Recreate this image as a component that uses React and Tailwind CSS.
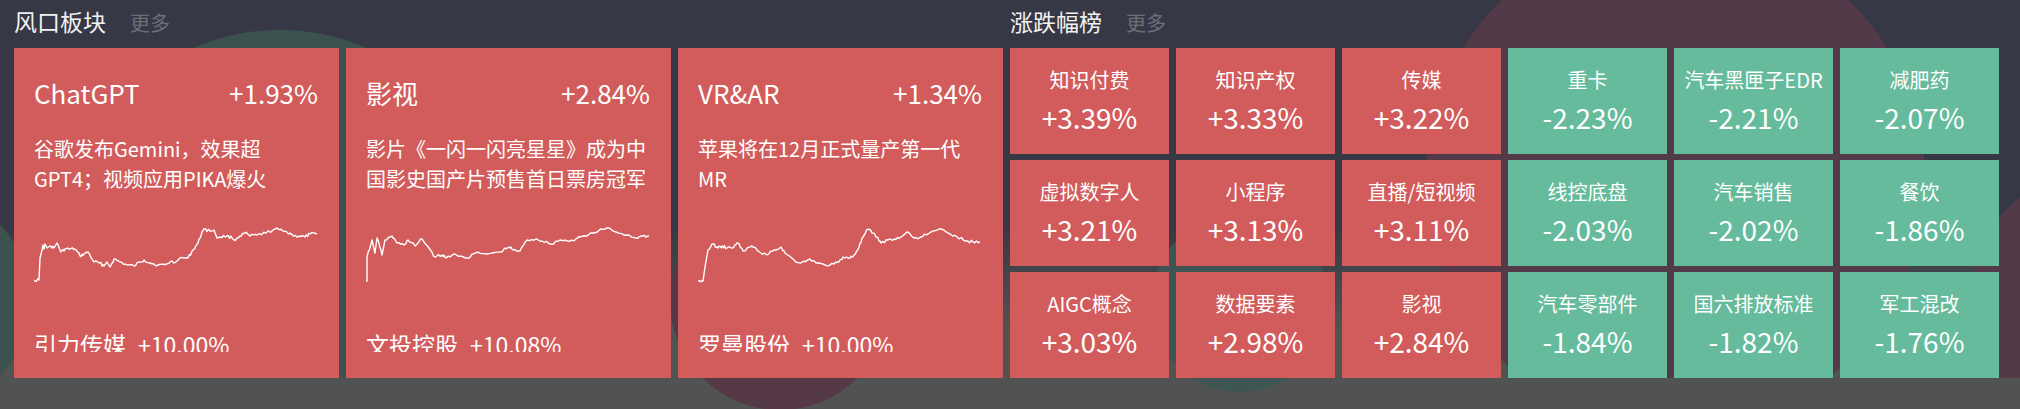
import React from "react";

// 风口板块 cards
const hotCards = [
  {
    name: "ChatGPT",
    pct: "+1.93%",
    lines: ["谷歌发布Gemini，效果超", "GPT4；视频应用PIKA爆火"],
    stock: "引力传媒",
    stockPct: "+10.00%",
    pts: [
      [0, 56], [5, 56], [6, 34], [8, 26], [9, 21], [10, 25], [11, 20], [13, 24], [16, 22], [20, 24], [23, 19],
      [27, 28], [31, 25], [36, 25], [41, 25], [46, 32], [50, 30], [54, 28], [60, 38], [66, 39], [70, 42],
      [73, 38], [76, 43], [80, 35], [86, 38], [93, 41], [100, 42], [106, 38], [110, 36], [116, 39], [124, 41],
      [131, 41], [136, 38], [143, 37], [146, 34], [154, 34], [159, 26], [164, 19], [168, 8], [170, 5], [176, 7],
      [180, 6], [183, 14], [186, 13], [193, 12], [198, 14], [200, 16], [206, 12], [211, 9], [216, 12], [223, 11],
      [232, 9], [241, 5], [249, 7], [256, 9], [260, 12], [266, 12], [271, 13], [276, 10], [283, 10],
    ],
  },
  {
    name: "影视",
    pct: "+2.84%",
    lines: ["影片《一闪一闪亮星星》成为中", "国影史国产片预售首日票房冠军"],
    stock: "文投控股",
    stockPct: "+10.08%",
    pts: [
      [0, 57], [1, 57], [1, 33], [6, 16], [9, 29], [11, 14], [16, 31], [19, 16], [26, 12], [31, 19], [38, 21],
      [42, 16], [49, 22], [56, 15], [63, 24], [69, 33], [76, 31], [80, 34], [89, 30], [103, 34], [109, 29],
      [121, 30], [134, 28], [143, 23], [147, 26], [154, 27], [161, 16], [170, 15], [176, 17], [185, 20],
      [194, 16], [201, 17], [210, 15], [214, 13], [228, 9], [241, 4], [250, 8], [261, 11], [270, 14],
      [277, 12], [283, 12],
    ],
  },
  {
    name: "VR&AR",
    pct: "+1.34%",
    lines: ["苹果将在12月正式量产第一代", "MR"],
    stock: "罗曼股份",
    stockPct: "+10.00%",
    pts: [
      [0, 57], [5, 57], [7, 43], [10, 26], [15, 20], [20, 24], [24, 22], [29, 24], [36, 23], [40, 19], [45, 27],
      [54, 22], [60, 27], [69, 31], [76, 26], [83, 23], [87, 29], [96, 36], [103, 39], [112, 35], [118, 39],
      [127, 41], [136, 40], [141, 38], [145, 33], [152, 34], [156, 31], [161, 23], [165, 13], [170, 5],
      [174, 9], [179, 13], [183, 19], [190, 16], [196, 15], [203, 13], [210, 8], [216, 14], [223, 13],
      [230, 10], [241, 5], [250, 9], [259, 13], [268, 17], [275, 18], [282, 18],
    ],
  },
];

// 涨跌幅榜, row by row: 3 up + 3 down
const ranks = [
  ["知识付费", "+3.39%", true], ["知识产权", "+3.33%", true], ["传媒", "+3.22%", true],
  ["重卡", "-2.23%", false], ["汽车黑匣子EDR", "-2.21%", false], ["减肥药", "-2.07%", false],
  ["虚拟数字人", "+3.21%", true], ["小程序", "+3.13%", true], ["直播/短视频", "+3.11%", true],
  ["线控底盘", "-2.03%", false], ["汽车销售", "-2.02%", false], ["餐饮", "-1.86%", false],
  ["AIGC概念", "+3.03%", true], ["数据要素", "+2.98%", true], ["影视", "+2.84%", true],
  ["汽车零部件", "-1.84%", false], ["国六排放标准", "-1.82%", false], ["军工混改", "-1.76%", false],
];

// adds a bit of noise between points so the line looks like intraday ticks
function jagged(pts, seed) {
  let s = seed;
  const rnd = () => {
    s = (s * 9301 + 49297) % 233280;
    return s / 233280 - 0.5;
  };
  const out = [pts[0]];
  for (let i = 1; i < pts.length; i++) {
    const [x0, y0] = pts[i - 1];
    const [x1, y1] = pts[i];
    if (x1 - x0 > 3) {
      for (let k = 1; k < 4; k++) {
        const t = k / 4;
        out.push([x0 + (x1 - x0) * t, y0 + (y1 - y0) * t + rnd() * 3]);
      }
    }
    out.push([x1, y1]);
  }
  return out.map(([x, y]) => `${x.toFixed(1)},${y.toFixed(1)}`).join(" ");
}

function Header({ title }) {
  return (
    <div className="h-[48px] pt-[6px] flex items-baseline">
      <span className="text-[23px] leading-[30px] text-[#f2f2f2]">{title}</span>
      <span className="ml-[24px] text-[20px] leading-[30px] text-[#6d6f78]">更多</span>
    </div>
  );
}

function HotCard({ card, i }) {
  return (
    <div className="bg-[#d25c5b] pt-[25px] pl-[20px] pr-[21px] text-white">
      <div className="h-[279px] overflow-hidden">
        <div className="flex justify-between h-[40px] text-[26px] leading-[40px]">
          <span>{card.name}</span>
          <span>{card.pct}</span>
        </div>
        <div className="mt-[21px] h-[60px] text-[20px] leading-[30px] whitespace-nowrap">
          {card.lines.map((l) => (
            <div key={l}>{l}</div>
          ))}
        </div>
        <svg className="mt-[30px] block" width="284" height="60" viewBox="0 0 284 60">
          <polyline
            points={jagged(card.pts, 17 + i * 31)}
            fill="none"
            stroke="#fff"
            strokeWidth="1.4"
            strokeLinejoin="round"
          />
        </svg>
        <div className="mt-[45px] text-[23px] leading-[30px] whitespace-nowrap">
          <span>{card.stock}</span>
          <span className="ml-3">{card.stockPct}</span>
        </div>
      </div>
    </div>
  );
}

export default function App() {
  return (
    <div className="relative w-[2020px] h-[409px] overflow-hidden bg-linear-to-b from-[#373845] from-55% to-[#505351] to-80% font-['Noto_Sans_CJK_SC','Noto_Sans',sans-serif]">
      {/* background blobs */}
      <div className="absolute left-[60px] top-[30px] w-[440px] h-[440px] rounded-full bg-[#3c524f]" />
      <div className="absolute left-[-190px] top-[190px] w-[220px] h-[220px] rounded-full bg-[#3c524f]" />
      <div className="absolute left-[1425px] top-[-70px] w-[500px] h-[500px] rounded-full bg-[#523a48]" />
      <div className="absolute left-[1970px] top-[170px] w-[260px] h-[260px] rounded-full bg-[#523a48]" />
      <div className="absolute left-0 top-[378px] w-full h-[31px] bg-[#505351]" />
      <div className="absolute left-[670px] top-[190px] w-[220px] h-[220px] rounded-full bg-[#553946]" />
      <div className="absolute left-[1151px] top-[214px] w-[178px] h-[178px] rounded-full bg-[#3d5653]" />

      <div className="relative flex gap-[7px] pl-[14px]">
        <section className="w-[989px]">
          <Header title="风口板块" />
          <div className="grid grid-cols-3 gap-[7px] h-[330px]">
            {hotCards.map((c, i) => (
              <HotCard key={c.name} card={c} i={i} />
            ))}
          </div>
        </section>
        <section className="w-[989px]">
          <Header title="涨跌幅榜" />
          <div className="grid grid-cols-6 grid-rows-3 gap-x-[7px] gap-y-[6px] h-[330px]">
            {ranks.map(([name, pct, up]) => (
              <div
                key={name + pct}
                className={`flex flex-col items-center justify-center text-white ${up ? "bg-[#d25c5b]" : "bg-[#65bb9b]"}`}
              >
                <div className="text-[20px] leading-[30px] whitespace-nowrap">{name}</div>
                <div className="mt-[2px] text-[28px] leading-[40px]">{pct}</div>
              </div>
            ))}
          </div>
        </section>
      </div>
    </div>
  );
}
